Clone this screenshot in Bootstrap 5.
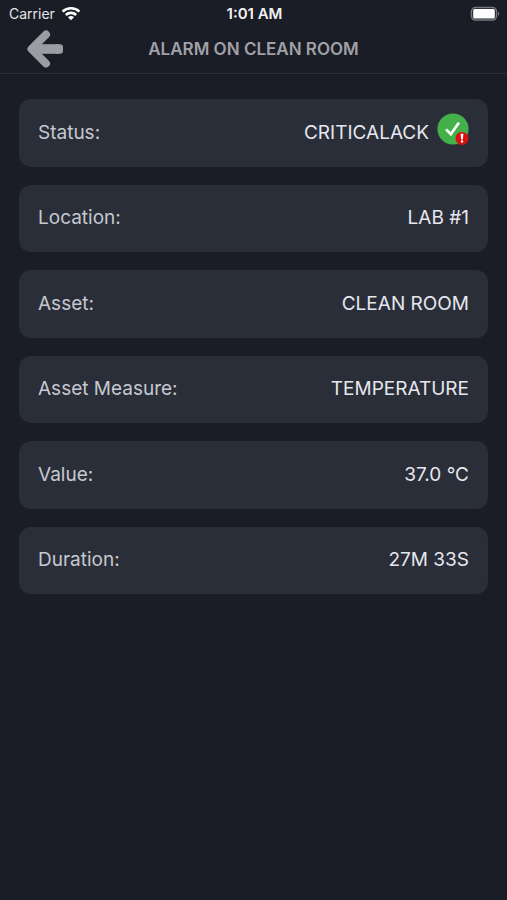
<!DOCTYPE html>
<html lang="en">
<head>
<meta charset="utf-8">
<meta name="viewport" content="width=device-width, initial-scale=1">
<title>Alarm on Clean Room</title>
<link href="https://cdn.jsdelivr.net/npm/bootstrap@5.3.0/dist/css/bootstrap.min.css" rel="stylesheet">
<style>
  body { background: #1a1d26; color: #e6e7ee; font-family: Inter, "Liberation Sans", sans-serif; }
  .status-bar { height: 27px; padding: 0 7px 0 9px; font-size: 14px; line-height: 27px; color: #e4e5e8; }
  .carrier { gap: 6px; }
  .clock { font-size: 15px; font-weight: 600; color: #f2f2f4; }
  .title-bar { height: 47px; padding-bottom: 3px; border-bottom: 1px solid #2b2d36; }
  .side { width: 64px; }
  .back { padding: 0 0 0 26px; line-height: 1; }
  .screen-title { font-size: 17px; line-height: 24px; font-weight: 600; color: #a0a1a7; }
  .details { padding: 25px 19px; }
  .detail-list { min-height: 495px; gap: 18px; }
  .detail { flex: 1 1 0; background: #2a2e39; border-radius: 12px; padding: 0 19px; font-size: 19px; line-height: 28px; }
  .detail dt { color: #c6c8d0; }
</style>
</head>
<body>
<header>
  <div class="status-bar d-flex align-items-center">
    <div class="carrier col d-flex align-items-center">
      <span>Carrier</span>
      <svg width="20" height="15" viewBox="0 0 20 15" fill="none" stroke="#fff" stroke-width="2.6" aria-hidden="true">
        <path d="M1.6 5.6C6.2 1.2 13.8 1.2 18.4 5.6"/>
        <path d="M4.8 9C7.7 6.2 12.3 6.2 15.2 9"/>
        <path d="M10 14.2 7 11.2C8.7 9.7 11.3 9.7 13 11.2Z" fill="#fff" stroke="none"/>
      </svg>
    </div>
    <div class="clock">1:01 AM</div>
    <div class="col d-flex justify-content-end">
      <svg width="30" height="16" viewBox="0 0 30 16" aria-hidden="true">
        <rect x="1.5" y="1.5" width="25" height="12.6" rx="4" fill="#1a1d26" stroke="#777980" stroke-width="1.5"/>
        <rect x="3.2" y="3" width="21.6" height="9.6" rx="1.5" fill="#fff"/>
        <path d="M28 5.5Q30.5 7.8 28 10Z" fill="#777980"/>
      </svg>
    </div>
  </div>
  <nav class="title-bar d-flex align-items-center justify-content-between" aria-label="Screen">
    <div class="side">
      <button type="button" class="btn border-0 back" aria-label="Back">
        <svg width="38" height="40" viewBox="0 0 38 40" fill="none" stroke="#9c9da2" stroke-linecap="round" stroke-linejoin="round" aria-hidden="true">
          <path d="M20 5.5 5.5 20 20 34.5" stroke-width="8"/>
          <path d="M7 20H32.5" stroke-width="9.6" stroke-linecap="butt"/>
          <path d="M31 18.2H34V21.8H31Z" fill="#9c9da2" stroke-width="6"/>
        </svg>
      </button>
    </div>
    <h1 class="screen-title m-0 text-uppercase">Alarm on Clean Room</h1>
    <div class="side"></div>
  </nav>
</header>
<main class="details">
  <dl class="detail-list d-flex flex-column m-0">
    <div class="detail d-flex align-items-center justify-content-between">
      <dt class="fw-normal">Status:</dt>
      <dd class="m-0 d-flex align-items-center gap-2">CRITICALACK
        <svg class="mb-2" width="32" height="32" viewBox="0 0 32 32" role="img" aria-label="Acknowledged">
          <circle cx="16" cy="16" r="15.6" fill="#43b04a"/>
          <path d="M9.1 16.4 13.8 21.2 22 9.4" fill="none" stroke="#fff" stroke-width="2.7"/>
          <circle cx="25" cy="25.4" r="6.5" fill="#dc0d0d"/>
          <path d="M23.6 20.8H26.4L25.9 26.5H24.1Z" fill="#fff"/>
          <circle cx="25" cy="28.5" r="1.2" fill="#fff"/>
        </svg>
      </dd>
    </div>
    <div class="detail d-flex align-items-center justify-content-between">
      <dt class="fw-normal">Location:</dt><dd class="m-0">LAB #1</dd>
    </div>
    <div class="detail d-flex align-items-center justify-content-between">
      <dt class="fw-normal">Asset:</dt><dd class="m-0">CLEAN ROOM</dd>
    </div>
    <div class="detail d-flex align-items-center justify-content-between">
      <dt class="fw-normal">Asset Measure:</dt><dd class="m-0">TEMPERATURE</dd>
    </div>
    <div class="detail d-flex align-items-center justify-content-between">
      <dt class="fw-normal">Value:</dt><dd class="m-0">37.0 °C</dd>
    </div>
    <div class="detail d-flex align-items-center justify-content-between">
      <dt class="fw-normal">Duration:</dt><dd class="m-0">27M 33S</dd>
    </div>
  </dl>
</main>
<script src="https://cdn.jsdelivr.net/npm/bootstrap@5.3.0/dist/js/bootstrap.bundle.min.js"></script>
</body>
</html>
